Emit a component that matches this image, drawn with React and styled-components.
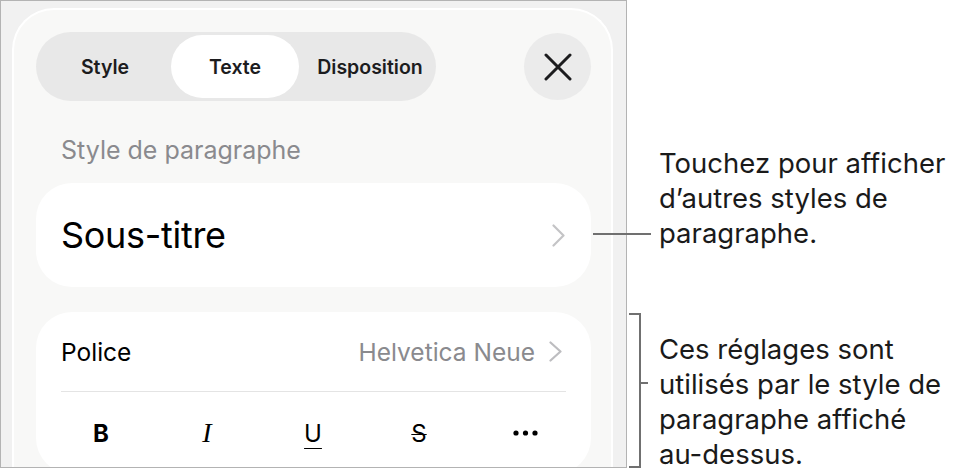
import React from 'react';
import styled, { createGlobalStyle } from 'styled-components';

const GlobalStyle = createGlobalStyle`
  body {
    margin: 0;
    background: #ffffff;
    font-family: Inter, "Liberation Sans", sans-serif;
  }
  * {
    box-sizing: border-box;
  }
`;

const Page = styled.div`
  position: relative;
  display: flex;
  width: 960px;
  height: 471px;
  overflow: hidden;
  background: #ffffff;
`;

const Frame = styled.div`
  width: 627px;
  height: 468px;
  flex-shrink: 0;
  border: 1px solid #b3b3b3;
  background: #f1f1f1;
  padding: 7px 0 0 11px;
  overflow: hidden;
`;

const Sheet = styled.div`
  width: 601px;
  height: 520px;
  background: #f8f8f7;
  border: 2px solid #ffffff;
  border-bottom: none;
  border-radius: 42px 42px 0 0;
  padding: 22px 20px 0 22px;
`;

const TopBar = styled.div`
  display: flex;
  justify-content: space-between;
  align-items: center;
`;

const Segmented = styled.div`
  display: flex;
  width: 400px;
  height: 69px;
  padding: 3px;
  border-radius: 35px;
  background: #e8e8e8;
`;

const Segment = styled.div`
  width: ${(p) => p.w}px;
  display: flex;
  align-items: center;
  justify-content: center;
  padding-left: ${(p) => p.shift || 0}px;
  border-radius: 32px;
  font-size: 19.5px;
  font-weight: 600;
  color: #1c1c1e;
  background: ${(p) => (p.active ? '#ffffff' : 'transparent')};
`;

const CloseButton = styled.div`
  width: 67px;
  height: 67px;
  border-radius: 50%;
  background: #ebebeb;
  display: flex;
  align-items: center;
  justify-content: center;
`;

const SectionLabel = styled.div`
  margin: 35px 0 0 25px;
  font-size: 25px;
  line-height: 28px;
  color: #8a8a8e;
`;

const Card = styled.div`
  margin-top: ${(p) => p.gap}px;
  background: #ffffff;
  border-radius: 36px;
  padding: 0 25px;
`;

const StyleRow = styled.div`
  height: 104px;
  display: flex;
  align-items: center;
  justify-content: space-between;
  padding-right: 1px;
`;

const BigLabel = styled.div`
  font-size: 36px;
  color: #000000;
  letter-spacing: -0.3px;
`;

const FontRow = styled.div`
  height: 79px;
  display: flex;
  align-items: center;
  justify-content: space-between;
  padding-right: 4px;
`;

const RowLabel = styled.div`
  font-size: 24.5px;
  color: #000000;
`;

const RowValue = styled.div`
  display: flex;
  align-items: center;
  gap: 14px;
  font-size: 24.5px;
  color: #8a8a8e;
`;

const Divider = styled.div`
  height: 1px;
  background: #e4e4e4;
`;

const FormatRow = styled.div`
  display: grid;
  grid-template-columns: repeat(5, 106px);
  margin-left: -13px;
  height: 82px;
  align-items: center;
`;

const FormatButton = styled.div`
  display: flex;
  justify-content: center;
  align-items: center;
  font-size: ${(p) => (p.serif ? 28 : 24)}px;
  color: #000000;
  font-family: ${(p) => (p.serif ? '"Liberation Serif", serif' : 'Inter, "Liberation Sans", sans-serif')};
  font-weight: ${(p) => (p.bold ? 700 : 400)};
  font-style: ${(p) => (p.italic ? 'italic' : 'normal')};
  text-decoration: ${(p) => p.deco || 'none'};
  text-underline-offset: 6px;
  text-decoration-thickness: 1.3px;
`;

const Notes = styled.div`
  margin-left: 32px;
  padding-top: 146px;
  display: flex;
  flex-direction: column;
  gap: 81px;
`;

const Note = styled.div`
  font-size: 27.5px;
  line-height: 35px;
  color: #1a1a1a;
  white-space: nowrap;
`;

const Leader = styled.div`
  position: absolute;
  left: 593px;
  top: 233px;
  width: 58px;
  height: 2px;
  background: #707070;
`;

const Bracket = styled.div`
  position: absolute;
  left: 629px;
  top: 313px;
  width: 12px;
  height: 155px;
  border: 2px solid #707070;
  border-left: none;
`;

const BracketTick = styled.div`
  position: absolute;
  left: 641px;
  top: 382px;
  width: 7px;
  height: 2px;
  background: #707070;
`;

const Chevron = ({ h = 23, color = '#c4c4c6' }) => (
  <svg width="13" height={h} viewBox={`0 0 13 ${h}`} fill="none">
    <polyline
      points={`1.5,1.5 11.5,${h / 2} 1.5,${h - 1.5}`}
      stroke={color}
      strokeWidth="2.2"
      strokeLinecap="round"
      strokeLinejoin="round"
    />
  </svg>
);

const CloseIcon = () => (
  <svg width="28" height="28" viewBox="0 0 28 28" fill="none">
    <path d="M2 2L26 26M26 2L2 26" stroke="#1c1c1e" strokeWidth="3" strokeLinecap="round" />
  </svg>
);

const Ellipsis = () => (
  <svg width="25" height="6" viewBox="0 0 25 6">
    <circle cx="3" cy="3" r="2.6" fill="#000" />
    <circle cx="12.5" cy="3" r="2.6" fill="#000" />
    <circle cx="22" cy="3" r="2.6" fill="#000" />
  </svg>
);

const App = () => (
  <Page>
    <GlobalStyle />
    <Frame>
      <Sheet>
        <TopBar>
          <Segmented>
            <Segment w={132}>Style</Segment>
            <Segment w={128} active>Texte</Segment>
            <Segment w={134} shift={8}>Disposition</Segment>
          </Segmented>
          <CloseButton>
            <CloseIcon />
          </CloseButton>
        </TopBar>

        <SectionLabel>Style de paragraphe</SectionLabel>

        <Card gap={19}>
          <StyleRow>
            <BigLabel>Sous-titre</BigLabel>
            <Chevron />
          </StyleRow>
        </Card>

        <Card gap={25}>
          <FontRow>
            <RowLabel>Police</RowLabel>
            <RowValue>
              Helvetica Neue
              <Chevron h={21} color="#bdbdc0" />
            </RowValue>
          </FontRow>
          <Divider />
          <FormatRow>
            <FormatButton bold>B</FormatButton>
            <FormatButton serif italic>I</FormatButton>
            <FormatButton deco="underline">U</FormatButton>
            <FormatButton deco="line-through">S</FormatButton>
            <FormatButton><Ellipsis /></FormatButton>
          </FormatRow>
        </Card>
      </Sheet>
    </Frame>

    <Notes>
      <Note>
        Touchez pour afficher<br />
        d’autres styles de<br />
        paragraphe.
      </Note>
      <Note>
        Ces réglages sont<br />
        utilisés par le style de<br />
        paragraphe affiché<br />
        au-dessus.
      </Note>
    </Notes>

    <Leader />
    <Bracket />
    <BracketTick />
  </Page>
);

export default App;
